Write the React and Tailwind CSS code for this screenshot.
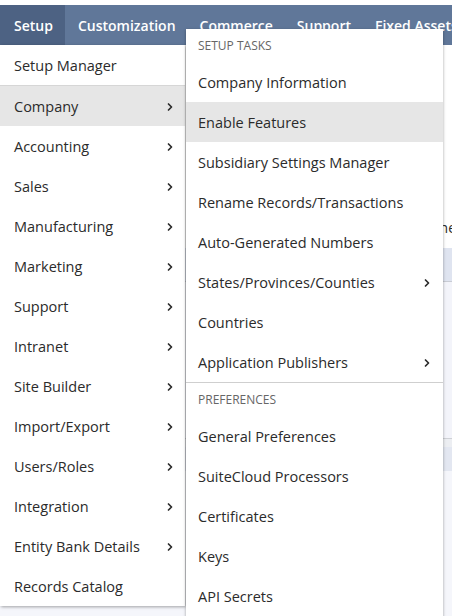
import { ChevronRight } from "lucide-react";

const mainItems = [
  { label: "Setup Manager" },
  { label: "Company", sub: true, active: true },
  { label: "Accounting", sub: true },
  { label: "Sales", sub: true },
  { label: "Manufacturing", sub: true },
  { label: "Marketing", sub: true },
  { label: "Support", sub: true },
  { label: "Intranet", sub: true },
  { label: "Site Builder", sub: true },
  { label: "Import/Export", sub: true },
  { label: "Users/Roles", sub: true },
  { label: "Integration", sub: true },
  { label: "Entity Bank Details", sub: true },
  { label: "Records Catalog" },
];

const setupTasks = [
  { label: "Company Information" },
  { label: "Enable Features", active: true },
  { label: "Subsidiary Settings Manager" },
  { label: "Rename Records/Transactions" },
  { label: "Auto-Generated Numbers" },
  { label: "States/Provinces/Counties", sub: true },
  { label: "Countries" },
  { label: "Application Publishers", sub: true },
];

const preferences = [
  { label: "General Preferences" },
  { label: "SuiteCloud Processors" },
  { label: "Certificates" },
  { label: "Keys" },
  { label: "API Secrets" },
];

const tabs = ["Setup", "Customization", "Commerce", "Support", "Fixed Assets"];

function Chevron() {
  return <ChevronRight size={12} strokeWidth={3.4} className="text-[#2b2b2b]" />;
}

function MenuRow({ item, pad = "pl-[14px] pr-[9px]" }) {
  return (
    <div
      className={`h-10 flex items-center justify-between pt-[2px] text-[14.5px] ${pad} ${
        item.active ? "bg-[#e6e6e6]" : ""
      }`}
    >
      <span>{item.label}</span>
      {item.sub && <Chevron />}
    </div>
  );
}

export default function App() {
  return (
    <div
      className="relative w-[452px] h-[616px] overflow-hidden bg-white text-[14px] text-[#2b2b2b]"
      style={{ fontFamily: '"Open Sans", "Noto Sans", sans-serif' }}
    >
      <div className="h-[5px] bg-white" />
      <nav className="h-10 bg-[#607799] flex items-stretch font-semibold text-white text-[14px] whitespace-nowrap">
        {tabs.map((t, i) => (
          <div
            key={t}
            className={`flex items-center ${
              i === 0 ? "bg-[#4d6283] pl-[14px] pr-[12px]" : "pl-[13px] pr-[11px]"
            }`}
          >
            {t}
          </div>
        ))}
      </nav>

      {/* page behind the menus */}
      <div className="flex flex-col h-[571px] bg-[#f4f5fa]">
        <div className="h-[172px] bg-white" />
        <div className="h-[26px] bg-white flex justify-end">
          <span className="text-[14px] mr-[-4px]">he</span>
        </div>
        <div className="h-[5px] bg-white" />
        <div className="h-[34px] bg-[#dfe4f0] border-b border-[#c9ccd4]" />
        <div className="h-[157px] bg-[#f3f4fa] border-b border-[#cfd1d6]" />
        <div className="h-[8px] bg-[#eceef2]" />
        <div className="h-[24px] bg-[#e3e7f1]" />
        <div className="flex-1 bg-[#f5f6fb]" />
      </div>

      {/* primary dropdown */}
      <div className="absolute left-0 top-[45px] w-[185px] bg-white shadow-[1px_1px_3px_rgba(0,0,0,0.35)]">
        {mainItems.map((item, i) => (
          <div key={item.label} className={i === 1 ? "border-t border-[#d6d6d6]" : ""}>
            <MenuRow item={item} />
          </div>
        ))}
      </div>

      {/* secondary flyout */}
      <div className="absolute left-[186px] top-[29px] w-[257px] h-[600px] bg-white shadow-[0_1px_3px_rgba(0,0,0,0.35)]">
        <div className="h-[33px] flex items-center pl-[12px] text-[12px] text-[#666] uppercase">
          Setup Tasks
        </div>
        {setupTasks.map((item) => (
          <MenuRow key={item.label} item={item} pad="pl-[12px] pr-[10px]" />
        ))}
        <div className="border-t border-[#cfcfcf] h-[34px] flex items-center pl-[12px] text-[12px] text-[#666] uppercase">
          Preferences
        </div>
        {preferences.map((item) => (
          <MenuRow key={item.label} item={item} pad="pl-[12px] pr-[10px]" />
        ))}
      </div>
    </div>
  );
}
